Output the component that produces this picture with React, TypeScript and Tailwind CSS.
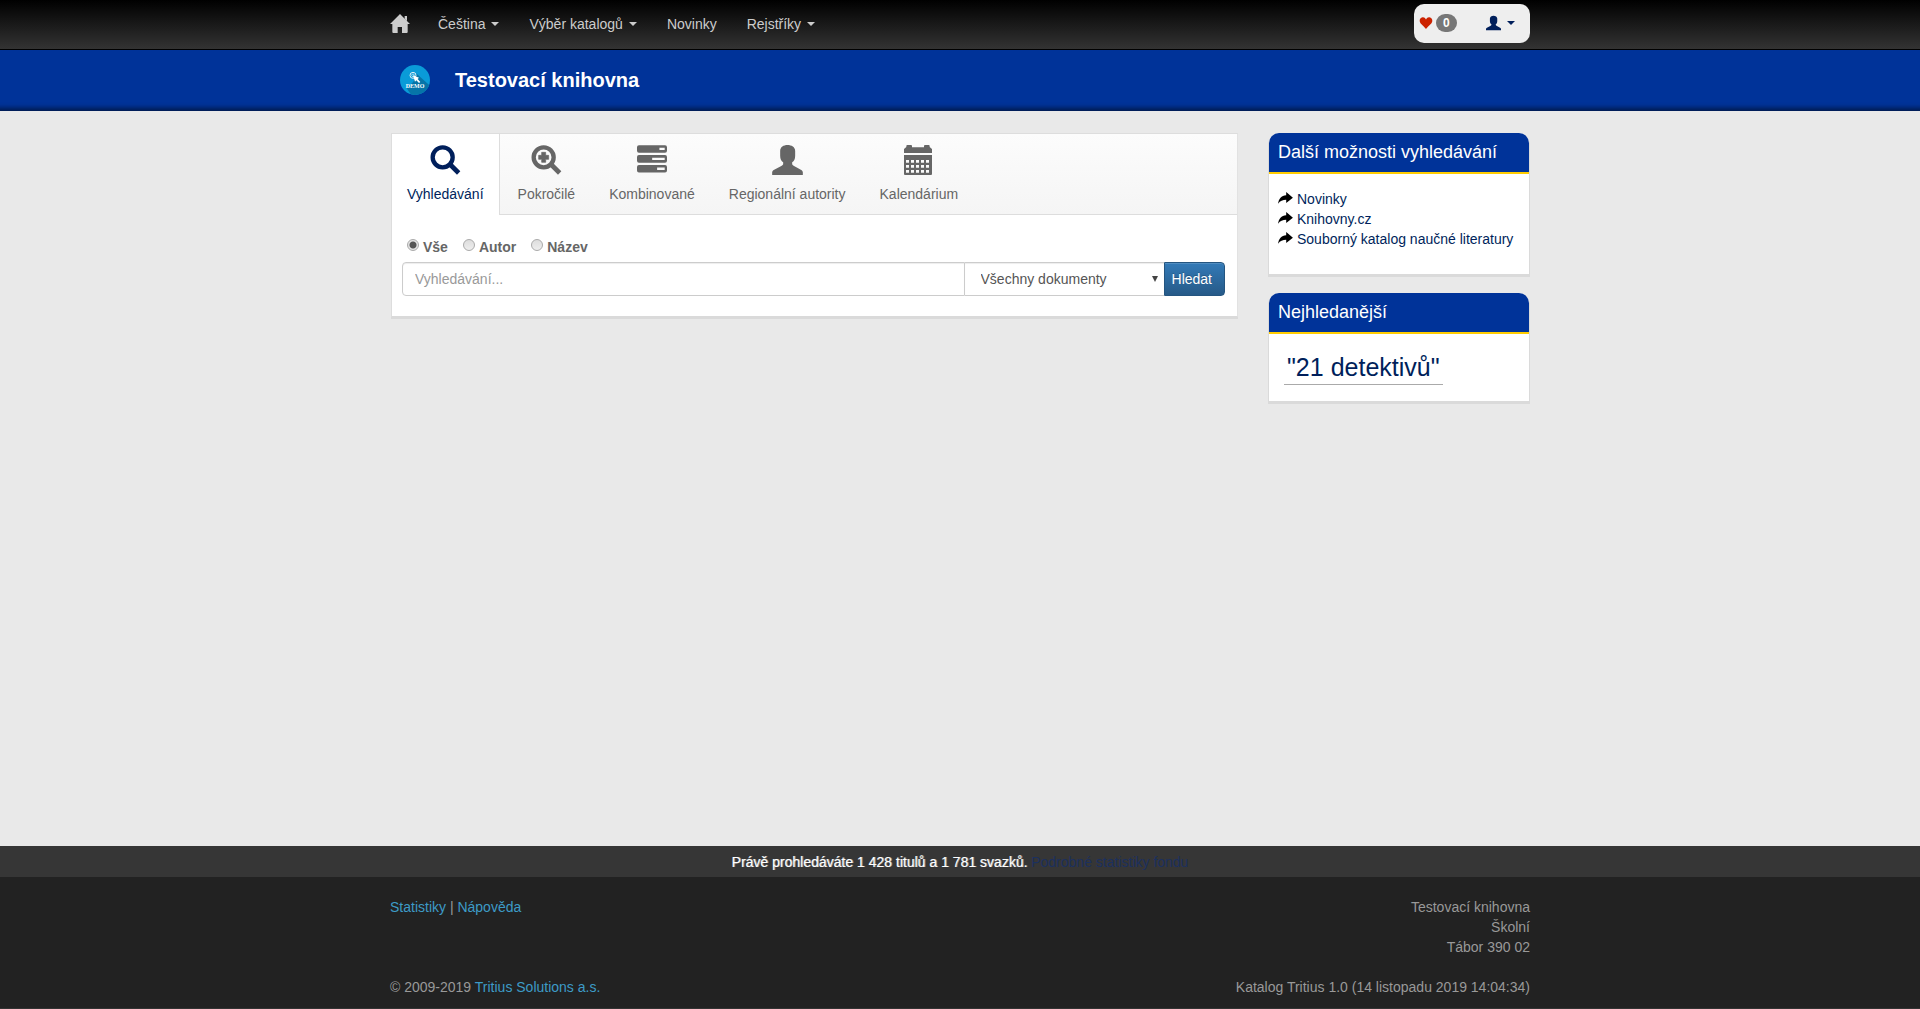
import type { ReactNode } from 'react';

interface IconProps {
  className?: string;
}

function HomeIcon({ className = '' }: IconProps) {
  return (
    <svg viewBox="0 0 60 60" fill="currentColor" className={className}>
      <path d="M30 0 L60 30 H53 V54 Q53 57 50 57 H36 V39 H23 V57 H10 Q7 57 7 54 V30 H0 Z" />
      <path d="M44 6 H51 V22 L44 15 Z" />
    </svg>
  );
}

function HeartIcon({ className = '' }: IconProps) {
  return (
    <svg viewBox="0 0 40 38" fill="currentColor" className={className}>
      <path d="M20 8 C17 2 13 0 9 1 C3 2 0 7 0 12 C0 21 11 27 20 38 C29 27 40 21 40 12 C40 7 37 2 31 1 C27 0 23 2 20 8 Z" />
    </svg>
  );
}

function UserIcon({ className = '' }: IconProps) {
  return (
    <svg viewBox="0 0 92 90" fill="currentColor" className={className}>
      <path d="M46 0 C58 0 69 6 69 18 V32 C69 42 66 48 60 52 V58 C61 60 63 62 67 64 L86 74 C90 76 92 79 92 82 V90 H0 V82 C0 79 2 76 6 74 L26 64 C30 62 32 60 33 58 V52 C27 48 24 42 24 32 V18 C24 6 34 0 46 0 Z" />
    </svg>
  );
}

function SearchIcon({ className = '', plus = false }: IconProps & { plus?: boolean }) {
  return (
    <svg viewBox="0 0 93 90" fill="none" stroke="currentColor" className={className}>
      <circle cx="38" cy="37" r="30" strokeWidth="13" />
      <path d="M59 57 L86 84" strokeWidth="14" />
      {plus && (
        <path
          d="M32 22 H44 V31 H53 V43 H44 V52 H32 V43 H23 V31 H32 Z"
          fill="currentColor"
          strokeWidth="2"
        />
      )}
    </svg>
  );
}

function TasksIcon({ className = '' }: IconProps) {
  return (
    <svg viewBox="0 0 91 90" fill="currentColor" fillRule="evenodd" className={className}>
      <path d="M6 0 H85 Q91 0 91 6 V17 Q91 23 85 23 H6 Q0 23 0 17 V6 Q0 0 6 0 Z M68 8 V15 H84 V8 Z" />
      <path d="M6 30 H85 Q91 30 91 36 V47 Q91 53 85 53 H6 Q0 53 0 47 V36 Q0 30 6 30 Z M46 38 V45 H84 V38 Z" />
      <path d="M6 60 H85 Q91 60 91 66 V77 Q91 83 85 83 H6 Q0 83 0 77 V66 Q0 60 6 60 Z M61 68 V75 H84 V68 Z" />
    </svg>
  );
}

function CalendarIcon({ className = '' }: IconProps) {
  return (
    <svg viewBox="0 0 90 90" fill="currentColor" fillRule="evenodd" className={className}>
      <path d="M0 24 V12 L7 6 V3 Q7 0 10 0 H21 Q24 0 24 3 V7 H60 V3 Q60 0 63 0 H74 Q77 0 77 3 V6 L84 12 V24 Z" />
      <path d="M0 30 H84 V87 Q84 90 81 90 H3 Q0 90 0 87 Z M6 45 V53 H15 V45 Z M21 45 V53 H30 V45 Z M36 45 V53 H45 V45 Z M51 45 V53 H60 V45 Z M66 45 V53 H75 V45 Z M6 60 V68 H15 V60 Z M21 60 V68 H30 V60 Z M36 60 V68 H45 V60 Z M51 60 V68 H60 V60 Z M66 60 V68 H75 V60 Z M6 75 V83 H15 V75 Z M21 75 V83 H30 V75 Z M36 75 V83 H45 V75 Z M51 75 V83 H60 V75 Z M66 75 V83 H75 V75 Z" />
    </svg>
  );
}

function ShareIcon({ className = '' }: IconProps) {
  return (
    <svg viewBox="0 0 42 34" fill="currentColor" className={className}>
      <path d="M23 0 L42 16 L23 31 V22 C13 22 6 25 0 33 C2 19 9 10 23 9 Z" />
    </svg>
  );
}

function Caret() {
  return <span className="inline-block border-x-4 border-t-4 border-x-transparent border-t-current" />;
}

function Logo() {
  return (
    <svg viewBox="0 0 90 90" className="size-[30px]" aria-label="Demo">
      <clipPath id="disc">
        <circle cx="45" cy="45" r="45" />
      </clipPath>
      <g clipPath="url(#disc)">
        <rect width="90" height="90" fill="#0a9bd8" />
        <path d="M50 26 L90 62 V90 H34 L20 70 L40 50 Z" fill="#0674a8" />
      </g>
      <circle cx="39" cy="31" r="9" fill="none" stroke="#d7eef8" strokeWidth="3" />
      <circle cx="39" cy="31" r="4" fill="none" stroke="#d7eef8" strokeWidth="2" />
      <path d="M39 31 L57 38 L53 42 L61 51 L57 54 L49 46 L45 50 Z" fill="#fff" />
      <text
        x="45"
        y="69"
        textAnchor="middle"
        fontFamily="Liberation Serif, serif"
        fontWeight="bold"
        fontSize="18"
        fill="#fff"
      >
        DEMO
      </text>
    </svg>
  );
}

const navItems = [
  { label: 'Čeština', dropdown: true },
  { label: 'Výběr katalogů', dropdown: true },
  { label: 'Novinky', dropdown: false },
  { label: 'Rejstříky', dropdown: true },
];

const tabs = [
  { label: 'Vyhledávání', icon: <SearchIcon className="h-[30px] w-[31px]" />, active: true },
  { label: 'Pokročilé', icon: <SearchIcon plus className="h-[30px] w-[31px]" /> },
  { label: 'Kombinované', icon: <TasksIcon className="size-[30px]" /> },
  { label: 'Regionální autority', icon: <UserIcon className="h-[30px] w-[31px]" /> },
  { label: 'Kalendárium', icon: <CalendarIcon className="size-[30px]" /> },
];

const links = ['Novinky', 'Knihovny.cz', 'Souborný katalog naučné literatury'];

function Container({ children, className = '' }: { children: ReactNode; className?: string }) {
  return <div className={`mx-auto w-full max-w-[1140px] ${className}`}>{children}</div>;
}

function Navbar() {
  return (
    <nav className="border-b border-black bg-linear-to-b/srgb from-black to-[#333]">
      <Container className="flex h-[49px] items-start justify-between">
        <div className="flex items-center gap-[30px] pt-3.5 text-[#ccc]">
          <a href="#" aria-label="Domů" className="-mr-0.5">
            <HomeIcon className="size-5" />
          </a>
          {navItems.map((item) => (
            <a key={item.label} href="#" className="flex items-center gap-1.5">
              {item.label}
              {item.dropdown && <Caret />}
            </a>
          ))}
        </div>
        <div className="mt-1 flex h-[39px] w-[116px] items-start justify-between rounded-[10px] bg-[#eee] pt-2.5 pr-[15px] pl-[5px]">
          <a href="#" aria-label="Oblíbené" className="flex items-center gap-[3px]">
            <HeartIcon className="h-3 w-3.5 text-[#cc2200]" />
            <span className="rounded-[10px] bg-[#777] px-[7px] text-xs leading-[18px] font-bold text-white">
              0
            </span>
          </a>
          <button type="button" aria-label="Uživatel" className="flex h-[18px] items-center gap-1.5 text-[#001f5b]">
            <UserIcon className="h-4 w-[15px]" />
            <Caret />
          </button>
        </div>
      </Container>
    </nav>
  );
}

function Tabs() {
  return (
    <ul className="flex border-b border-[#ddd] bg-linear-to-b from-[#fcfcfc] to-[#f5f5f5]">
      {tabs.map((tab) => (
        <li key={tab.label} className="-mb-px mr-0.5 first:-ml-px">
          <a
            href="#"
            className={`flex flex-col items-center gap-[9px] border-x px-[15px] pt-[11px] pb-[11px] ${
              tab.active ? 'border-[#ddd] bg-white text-[#001f5b]' : 'border-transparent text-[#666]'
            }`}
          >
            {tab.icon}
            <span>{tab.label}</span>
          </a>
        </li>
      ))}
    </ul>
  );
}

function SearchForm() {
  return (
    <form className="pt-[19px] pr-3 pb-5 pl-2.5">
      <div className="flex gap-[15px] px-[5px] pt-[3px] pb-[5px]">
        {['Vše', 'Autor', 'Název'].map((label, index) => (
          <label key={label} className="flex gap-1 font-bold text-[#666]">
            <input
              type="radio"
              name="scope"
              defaultChecked={index === 0}
              className="mt-0.5 size-3 appearance-none self-start rounded-full border border-[#aaa] bg-linear-to-b from-[#ddd] to-[#eee] checked:bg-[radial-gradient(circle,#555_0_3px,#e4e4e4_4px)]"
            />
            {label}
          </label>
        ))}
      </div>
      <div className="flex h-[34px]">
        <input
          type="text"
          aria-label="Vyhledávání"
          placeholder="Vyhledávání..."
          className="min-w-0 flex-1 rounded-l border border-[#ccc] bg-white px-3 shadow-[inset_0_1px_1px_rgba(0,0,0,0.075)] placeholder:text-[#999]"
        />
        <div className="relative w-[199px]">
          <select
            aria-label="Typ dokumentu"
            className="h-full w-full appearance-none border-y border-[#ccc] bg-white px-4 text-[#555] shadow-[inset_0_1px_1px_rgba(0,0,0,0.075)]"
          >
            <option>Všechny dokumenty</option>
          </select>
          <span className="pointer-events-none absolute top-3.5 right-1.5 border-x-[3px] border-t-[6px] border-x-transparent border-t-[#444]" />
        </div>
        <button
          type="submit"
          className="rounded-r border border-[#245580] bg-linear-to-b from-[#337ab7] to-[#265a88] pr-3 pl-[7px] text-white shadow-[inset_0_1px_0_rgba(255,255,255,0.15)] text-shadow-[0_-1px_0_rgba(0,0,0,0.2)]"
        >
          Hledat
        </button>
      </div>
    </form>
  );
}

function SidePanel({ title, children }: { title: string; children: ReactNode }) {
  return (
    <section className="rounded-t-[10px] bg-white shadow-[0_2px_0_1px_#dadada]">
      <h2 className="rounded-t-[10px] border-b-2 border-[#ffcc00] bg-[#003399] px-[9px] pt-[9px] pb-2.5 text-lg leading-5 text-white">
        {title}
      </h2>
      {children}
    </section>
  );
}

export default function App() {
  return (
    <div className="flex min-h-screen flex-col bg-[#e9e9e9] font-['Liberation_Sans',Arial,sans-serif] text-sm leading-5 text-[#555]">
      <Navbar />

      <header className="bg-[#003399] shadow-[inset_0_-9px_5px_-6px_rgba(0,0,0,0.5)]">
        <Container className="flex h-[61px] items-center gap-[25px] pb-0.5 pl-2.5">
          <Logo />
          <h1 className="text-xl font-bold text-white">Testovací knihovna</h1>
        </Container>
      </header>

      <Container className="flex flex-1 items-start gap-[31px] px-px pt-[22px] pb-10">
        <main className="min-w-0 flex-1 border border-t-[#ddd] border-r-[#e2e2e2] border-b-[#dadada] border-l-[#ddd] bg-white shadow-[0_2px_0_#dadada]">
          <Tabs />
          <SearchForm />
        </main>

        <aside className="w-[260px] shrink-0 space-y-[19px]">
          <SidePanel title="Další možnosti vyhledávání">
            <ul className="pt-[15px] pr-2 pb-[25px] pl-[9px]">
              {links.map((link) => (
                <li key={link} className="flex items-start gap-1 whitespace-nowrap">
                  <ShareIcon className="mt-[3px] h-3 w-[15px] text-black" />
                  <a href="#" className="text-[#001f5b]">
                    {link}
                  </a>
                </li>
              ))}
            </ul>
          </SidePanel>
          <SidePanel title="Nejhledanější">
            <div className="px-[15px] pt-4 pb-4">
              <a
                href="#"
                className="inline-block border-b border-[#aaa] px-[3px] text-[25px] leading-[34px] text-[#001f5b]"
              >
                "21 detektivů"
              </a>
            </div>
          </SidePanel>
        </aside>
      </Container>

      <div className="bg-[#363636] pt-1.5 pb-[5px] text-center text-white text-shadow-[1px_0_0_#999]">
        Právě prohledáváte 1 428 titulů a 1 781 svazků.{' '}
        <a href="#" className="text-[#1c305e] text-shadow-none">
          Podrobné statistiky fondu
        </a>
      </div>
      <footer className="border-b border-[#333] bg-[#222] text-[#999]">
        <Container className="flex justify-between pt-5 pb-[11px]">
          <div className="flex flex-col justify-between">
            <p>
              <a href="#" className="text-[#3d9bc7]">Statistiky</a> |{' '}
              <a href="#" className="text-[#3d9bc7]">Nápověda</a>
            </p>
            <p>
              © 2009-2019 <a href="#" className="text-[#3d9bc7]">Tritius Solutions a.s.</a>
            </p>
          </div>
          <div className="text-right">
            <address className="not-italic">
              Testovací knihovna
              <br />
              Školní
              <br />
              Tábor 390 02
            </address>
            <p className="mt-5">Katalog Tritius 1.0 (14 listopadu 2019 14:04:34)</p>
          </div>
        </Container>
      </footer>
    </div>
  );
}
